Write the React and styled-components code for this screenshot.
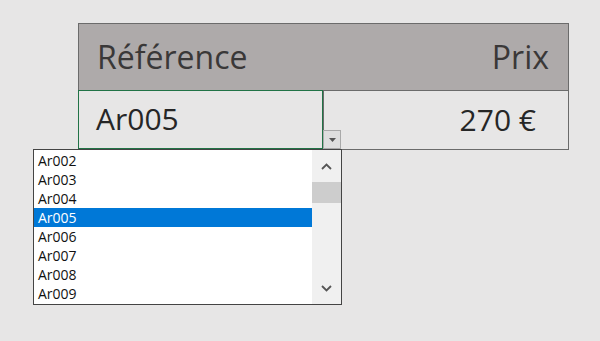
import React from 'react';
import styled, { createGlobalStyle } from 'styled-components';

const Global = createGlobalStyle`
  html, body { margin: 0; padding: 0; background: #e7e6e6; }
  body { font-family: "Open Sans", "Noto Sans", sans-serif; }
`
const Page = styled.div`
  width: 600px;
  height: 341px;
  padding: 23px 0 0 78px;
  box-sizing: border-box;
  overflow: hidden;
`
const Table = styled.div`
  position: relative;
  width: 491px;
  border: 1px solid #6b6b6b;
  box-sizing: border-box;
`
const Header = styled.div`
  height: 67px;
  box-sizing: border-box;
  background: #aeaaaa;
  border-bottom: 1px solid #6b6b6b;
  display: flex;
  align-items: center;
  justify-content: space-between;
  padding: 0 19px 2px 18px;
  font-size: 32px;
  color: #3a3838;
`
const Row = styled.div`
  display: grid;
  grid-template-columns: 245px 1fr;
  height: 58px;
`
const Cell = styled.div`
  display: flex;
  align-items: center;
  justify-content: ${p => (p.$right ? 'flex-end' : 'flex-start')};
  padding: ${p => (p.$right ? '0 32px 2px 0' : '0 0 2px 18px')};
  font-size: 30px;
  color: #262626;
  border-right: ${p => (p.$right ? 'none' : '1px solid #6b6b6b')};
`
const Selected = styled(Cell)`
  position: relative;
  box-shadow: inset 0 0 0 1px #217346;
  margin: -1px 0 0 -1px;
  height: 59px;
  box-sizing: border-box;
`
const DropButton = styled.div`
  position: absolute;
  left: 244px;
  top: 106px;
  width: 18px;
  height: 19px;
  background: #dedede;
  border: 1px solid #a9a9a9;
  box-sizing: border-box;
  display: flex;
  align-items: center;
  justify-content: center;
`
const List = styled.div`
  position: absolute;
  left: -46px;
  top: 125px;
  width: 309px;
  height: 156px;
  background: #fff;
  border: 1px solid #444;
  box-sizing: border-box;
  display: grid;
  grid-template-columns: 1fr 29px;
`
const Items = styled.div`
  display: flex;
  flex-direction: column;
  padding-top: 1px;
`
const Item = styled.div`
  height: 19px;
  line-height: 19px;
  padding-left: 4px;
  font-size: 14px;
  color: ${p => (p.$active ? '#fff' : '#111')};
  background: ${p => (p.$active ? '#0078d7' : 'transparent')};
`
const Scroll = styled.div`
  background: #f0f0f0;
  display: flex;
  flex-direction: column;
  align-items: stretch;
`
const Arrow = styled.div`
  height: 32px;
  display: flex;
  align-items: center;
  justify-content: center;
`
const Thumb = styled.div`
  height: 21px;
  background: #cdcdcd;
`
const Track = styled.div`
  flex: 1;
`

const items = ['Ar002', 'Ar003', 'Ar004', 'Ar005', 'Ar006', 'Ar007', 'Ar008', 'Ar009'];

export default function App() {
  return (
    <Page>
      <Global />
      <Table>
        <Header>
          <span>Référence</span>
          <span>Prix</span>
        </Header>
        <Row>
          <Selected>Ar005</Selected>
          <Cell $right>270 €</Cell>
        </Row>
        <DropButton>
          <svg width="7" height="4" viewBox="0 0 7 4"><path d="M0 0h7L3.5 4z" fill="#555" /></svg>
        </DropButton>
        <List>
          <Items>
            {items.map(it => (
              <Item key={it} $active={it === 'Ar005'}>{it}</Item>
            ))}
          </Items>
          <Scroll>
            <Arrow>
              <svg width="11" height="7" viewBox="0 0 11 7"><path d="M1 6l4.5-4.5L10 6" fill="none" stroke="#555" strokeWidth="1.8" /></svg>
            </Arrow>
            <Thumb />
            <Track />
            <Arrow>
              <svg width="11" height="7" viewBox="0 0 11 7"><path d="M1 1l4.5 4.5L10 1" fill="none" stroke="#555" strokeWidth="1.8" /></svg>
            </Arrow>
          </Scroll>
        </List>
      </Table>
    </Page>
  );
}
